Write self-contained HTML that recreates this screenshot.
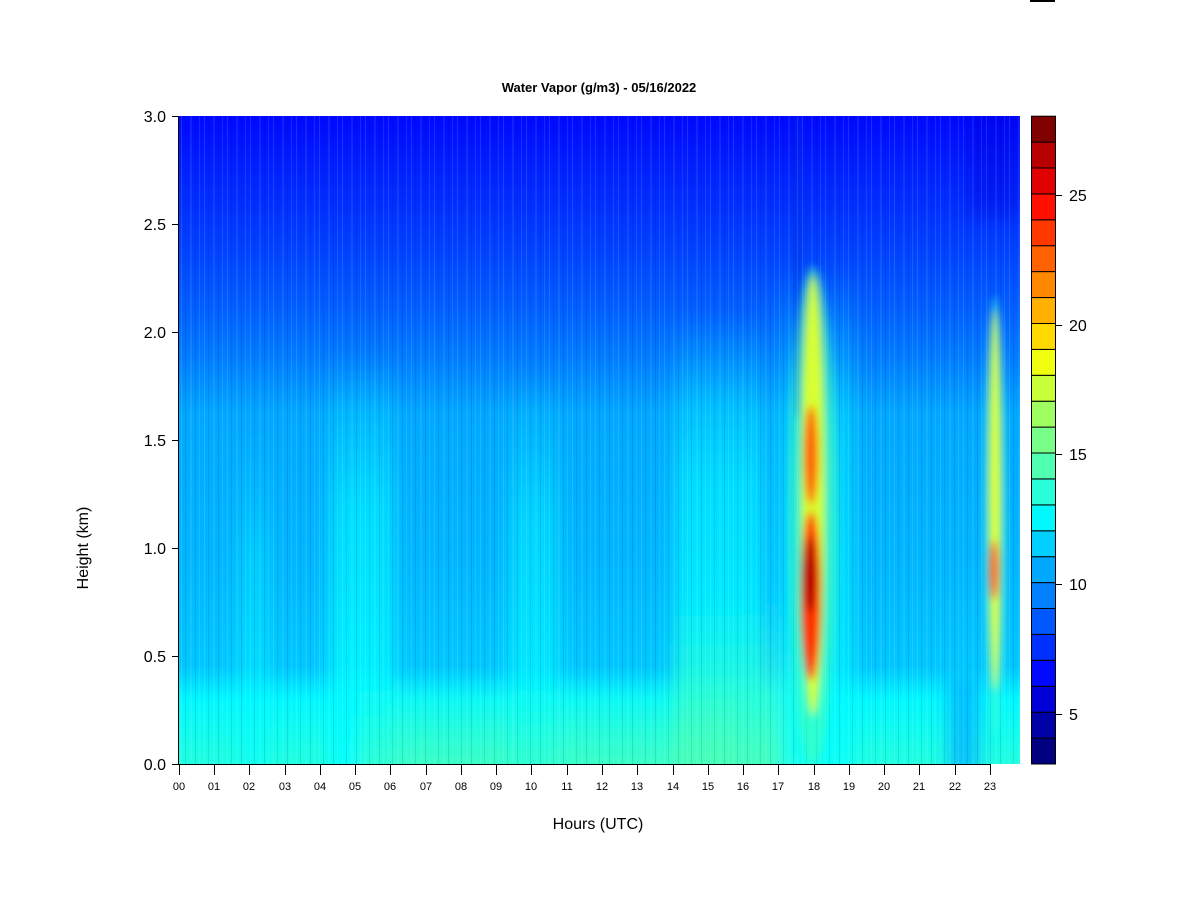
<!DOCTYPE html>
<html><head><meta charset="utf-8"><style>
html,body{margin:0;padding:0;background:#fff;width:1200px;height:900px;overflow:hidden}
svg{display:block}
text{font-family:"Liberation Sans",Arial,sans-serif;fill:#000}
</style></head><body>
<svg width="1200" height="900" viewBox="0 0 1200 900" xmlns="http://www.w3.org/2000/svg">
<defs>
<linearGradient id="base" x1="0" y1="0" x2="0" y2="1">
<stop offset="0" stop-color="#0008ff"/>
<stop offset="0.08" stop-color="#0020ff"/>
<stop offset="0.20" stop-color="#0040ff"/>
<stop offset="0.30" stop-color="#0060ff"/>
<stop offset="0.38" stop-color="#0080ff"/>
<stop offset="0.46" stop-color="#00a8ff"/>
<stop offset="0.70" stop-color="#00b8ff"/>
<stop offset="0.85" stop-color="#00c8ff"/>
<stop offset="0.90" stop-color="#00f8ff"/>
<stop offset="1" stop-color="#20ffe0"/>
</linearGradient>
<linearGradient id="band" x1="0" y1="0" x2="0" y2="1">
<stop offset="0" stop-color="#00e0ff" stop-opacity="0"/>
<stop offset="0.35" stop-color="#00f0ff" stop-opacity="0.7"/>
<stop offset="1" stop-color="#00ffff" stop-opacity="0.9"/>
</linearGradient>
<linearGradient id="green" x1="0" y1="0" x2="0" y2="1">
<stop offset="0" stop-color="#40ffc0" stop-opacity="0"/>
<stop offset="1" stop-color="#50ffb0" stop-opacity="0.9"/>
</linearGradient>
<pattern id="tex" width="23" height="648" patternUnits="userSpaceOnUse">
<rect x="2" width="1" height="648" fill="#ffffff" opacity="0.12"/>
<rect x="6" width="1" height="648" fill="#000060" opacity="0.1"/>
<rect x="11" width="2" height="648" fill="#ffffff" opacity="0.08"/>
<rect x="16" width="1" height="648" fill="#000060" opacity="0.12"/>
<rect x="20" width="1" height="648" fill="#ffffff" opacity="0.1"/>
</pattern>
<filter id="b4" x="-50%" y="-20%" width="200%" height="140%"><feGaussianBlur stdDeviation="4"/></filter>
<filter id="b8" x="-50%" y="-20%" width="200%" height="140%"><feGaussianBlur stdDeviation="9"/></filter>
<clipPath id="pc"><rect x="0" y="0" width="841" height="648"/></clipPath>
</defs>

<rect x="1030" y="0" width="25" height="2" fill="#000"/>

<text x="599" y="92" font-size="13" font-weight="bold" text-anchor="middle">Water Vapor (g/m3) - 05/16/2022</text>

<g transform="translate(179,116)" clip-path="url(#pc)">
<rect width="841" height="648" fill="url(#base)"/>
<g filter="url(#b8)">
<rect x="150" y="240" width="65" height="420" fill="url(#band)"/>
<rect x="330" y="260" width="50" height="400" fill="url(#band)" opacity="0.8"/>
<rect x="495" y="200" width="90" height="460" fill="url(#band)"/>
<rect x="60" y="320" width="30" height="340" fill="url(#band)" opacity="0.6"/>
<rect x="180" y="560" width="380" height="100" fill="url(#green)" opacity="0.7"/>
<rect x="495" y="480" width="130" height="180" fill="url(#green)"/>
<rect x="600" y="150" width="75" height="510" fill="url(#band)" opacity="0.8"/>
<rect x="770" y="560" width="30" height="100" fill="#00b0ff" opacity="0.8"/>
<rect x="790" y="-10" width="50" height="110" fill="#0000e0" opacity="0.35"/>
</g>
<rect x="617" y="0" width="5" height="300" fill="#0030e0" opacity="0.7" filter="url(#b4)"/>
<rect width="841" height="648" fill="url(#tex)"/>
<g filter="url(#b4)">
<ellipse cx="634" cy="400" rx="24" ry="250" fill="#50ffb0" opacity="0.55"/>
<ellipse cx="634" cy="380" rx="12" ry="220" fill="#d8ff30"/>
<ellipse cx="632" cy="339" rx="7" ry="50" fill="#ff6000"/>
<ellipse cx="632" cy="480" rx="10" ry="85" fill="#ff3000"/>
<ellipse cx="631" cy="459" rx="6" ry="38" fill="#b00000"/>
<ellipse cx="816" cy="400" rx="10" ry="220" fill="#40ffd0" opacity="0.6"/>
<ellipse cx="816" cy="384" rx="6" ry="190" fill="#e0ff20"/>
<ellipse cx="815" cy="454" rx="5" ry="30" fill="#ff6000"/>
</g>
</g>

<g stroke="#000" stroke-width="1">
<line x1="179" y1="764.5" x2="990" y2="764.5"/>
<line x1="178.5" y1="116" x2="178.5" y2="764"/>
</g>
<g stroke="#000" stroke-width="1">
<line x1="179.5" y1="764" x2="179.5" y2="775"/><line x1="214.5" y1="764" x2="214.5" y2="775"/><line x1="249.5" y1="764" x2="249.5" y2="775"/><line x1="285.5" y1="764" x2="285.5" y2="775"/><line x1="320.5" y1="764" x2="320.5" y2="775"/><line x1="355.5" y1="764" x2="355.5" y2="775"/><line x1="390.5" y1="764" x2="390.5" y2="775"/><line x1="426.5" y1="764" x2="426.5" y2="775"/><line x1="461.5" y1="764" x2="461.5" y2="775"/><line x1="496.5" y1="764" x2="496.5" y2="775"/><line x1="531.5" y1="764" x2="531.5" y2="775"/><line x1="567.5" y1="764" x2="567.5" y2="775"/><line x1="602.5" y1="764" x2="602.5" y2="775"/><line x1="637.5" y1="764" x2="637.5" y2="775"/><line x1="673.5" y1="764" x2="673.5" y2="775"/><line x1="708.5" y1="764" x2="708.5" y2="775"/><line x1="743.5" y1="764" x2="743.5" y2="775"/><line x1="778.5" y1="764" x2="778.5" y2="775"/><line x1="814.5" y1="764" x2="814.5" y2="775"/><line x1="849.5" y1="764" x2="849.5" y2="775"/><line x1="884.5" y1="764" x2="884.5" y2="775"/><line x1="919.5" y1="764" x2="919.5" y2="775"/><line x1="955.5" y1="764" x2="955.5" y2="775"/><line x1="990.5" y1="764" x2="990.5" y2="775"/>
<line x1="172" y1="116.5" x2="179" y2="116.5"/><line x1="172" y1="224.5" x2="179" y2="224.5"/><line x1="172" y1="332.5" x2="179" y2="332.5"/><line x1="172" y1="440.5" x2="179" y2="440.5"/><line x1="172" y1="548.5" x2="179" y2="548.5"/><line x1="172" y1="656.5" x2="179" y2="656.5"/><line x1="172" y1="764.5" x2="179" y2="764.5"/>
</g>
<g font-size="11" text-anchor="middle">
<text x="179" y="790">00</text><text x="214" y="790">01</text><text x="249" y="790">02</text><text x="285" y="790">03</text><text x="320" y="790">04</text><text x="355" y="790">05</text><text x="390" y="790">06</text><text x="426" y="790">07</text><text x="461" y="790">08</text><text x="496" y="790">09</text><text x="531" y="790">10</text><text x="567" y="790">11</text><text x="602" y="790">12</text><text x="637" y="790">13</text><text x="673" y="790">14</text><text x="708" y="790">15</text><text x="743" y="790">16</text><text x="778" y="790">17</text><text x="814" y="790">18</text><text x="849" y="790">19</text><text x="884" y="790">20</text><text x="919" y="790">21</text><text x="955" y="790">22</text><text x="990" y="790">23</text>
</g>
<g font-size="16" text-anchor="end">
<text x="166" y="122">3.0</text><text x="166" y="230">2.5</text><text x="166" y="338">2.0</text><text x="166" y="446">1.5</text><text x="166" y="554">1.0</text><text x="166" y="662">0.5</text><text x="166" y="770">0.0</text>
</g>
<text x="598" y="829" font-size="16" text-anchor="middle">Hours (UTC)</text>
<text transform="translate(88,548) rotate(-90)" font-size="16" text-anchor="middle">Height (km)</text>

<g stroke="#000" stroke-width="1">
<rect x="1031.5" y="738.1" width="24" height="25.9" fill="#000080"/>
<rect x="1031.5" y="712.2" width="24" height="25.9" fill="#0000a8"/>
<rect x="1031.5" y="686.3" width="24" height="25.9" fill="#0000d8"/>
<rect x="1031.5" y="660.4" width="24" height="25.9" fill="#0008ff"/>
<rect x="1031.5" y="634.4" width="24" height="25.9" fill="#0030ff"/>
<rect x="1031.5" y="608.5" width="24" height="25.9" fill="#0058ff"/>
<rect x="1031.5" y="582.6" width="24" height="25.9" fill="#0080ff"/>
<rect x="1031.5" y="556.7" width="24" height="25.9" fill="#00a8ff"/>
<rect x="1031.5" y="530.8" width="24" height="25.9" fill="#00d0ff"/>
<rect x="1031.5" y="504.9" width="24" height="25.9" fill="#00f8ff"/>
<rect x="1031.5" y="479.0" width="24" height="25.9" fill="#28ffd8"/>
<rect x="1031.5" y="453.0" width="24" height="25.9" fill="#50ffb0"/>
<rect x="1031.5" y="427.1" width="24" height="25.9" fill="#78ff88"/>
<rect x="1031.5" y="401.2" width="24" height="25.9" fill="#a0ff60"/>
<rect x="1031.5" y="375.3" width="24" height="25.9" fill="#c8ff38"/>
<rect x="1031.5" y="349.4" width="24" height="25.9" fill="#f0ff10"/>
<rect x="1031.5" y="323.5" width="24" height="25.9" fill="#ffd800"/>
<rect x="1031.5" y="297.6" width="24" height="25.9" fill="#ffb000"/>
<rect x="1031.5" y="271.6" width="24" height="25.9" fill="#ff8800"/>
<rect x="1031.5" y="245.7" width="24" height="25.9" fill="#ff6000"/>
<rect x="1031.5" y="219.8" width="24" height="25.9" fill="#ff3800"/>
<rect x="1031.5" y="193.9" width="24" height="25.9" fill="#ff1000"/>
<rect x="1031.5" y="168.0" width="24" height="25.9" fill="#e00000"/>
<rect x="1031.5" y="142.1" width="24" height="25.9" fill="#b80000"/>
<rect x="1031.5" y="116.2" width="24" height="25.9" fill="#800000"/>
<line x1="1055" y1="195.5" x2="1062" y2="195.5"/>
<line x1="1055" y1="325.5" x2="1062" y2="325.5"/>
<line x1="1055" y1="454.5" x2="1062" y2="454.5"/>
<line x1="1055" y1="584.5" x2="1062" y2="584.5"/>
<line x1="1055" y1="714.5" x2="1062" y2="714.5"/>
</g>
<g font-size="16">
<text x="1069" y="201">25</text><text x="1069" y="331">20</text><text x="1069" y="460">15</text><text x="1069" y="590">10</text><text x="1069" y="720">5</text>
</g>
</svg>
</body></html>
